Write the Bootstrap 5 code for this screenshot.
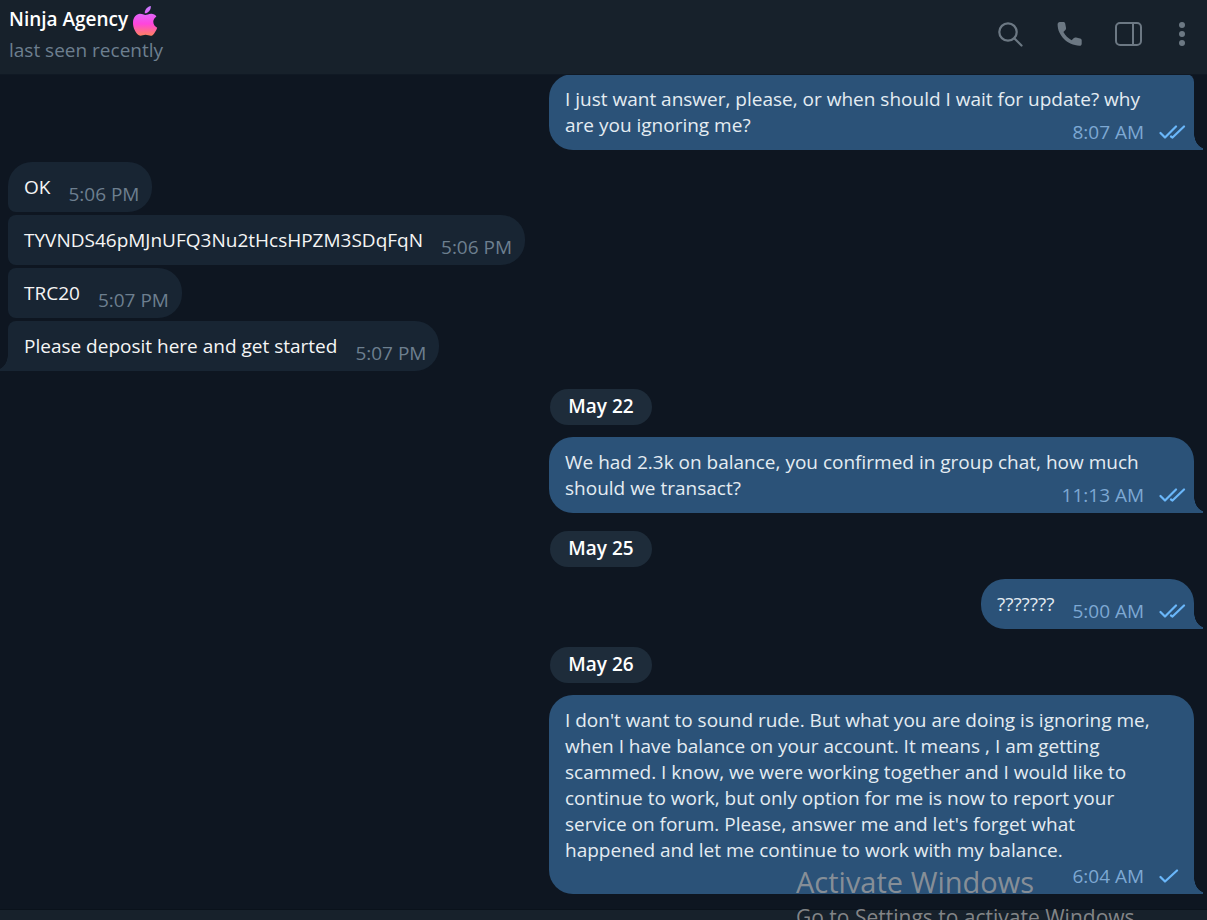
<!DOCTYPE html>
<html lang="en">
<head>
<meta charset="utf-8">
<meta name="viewport" content="width=device-width, initial-scale=1">
<title>Ninja Agency</title>
<link href="https://cdn.jsdelivr.net/npm/bootstrap@5.3.0/dist/css/bootstrap.min.css" rel="stylesheet">
<style>
  :root { --out: #2b5278; --in: #182533; --bar: #17212b; }
  body { background: #0e1621; color: #f5f5f5; font-family: "Open Sans", "Noto Sans", sans-serif; font-size: 19px; line-height: 26px; }
  .topbar { background: var(--bar); height: 75px; border-bottom: 1px solid #101924; padding: 6px 14px 0 9px; z-index: 2; }
  .peer-name { font-size: 19px; font-weight: 600; line-height: 26px; color: #fff; }
  .peer-status { color: #6d7f8f; line-height: 26px; margin-top: 5px; }
  .peer-logo { width: 26px; height: 30px; margin: 0 0 -4px 4px; }
  .tool-btn { color: #6c7883; line-height: 0; }
  .tools { gap: 29px; height: 56px; }
  .thread { padding: 0 13px 15px 8px; margin-top: -1px; }
  .bubble { position: relative; display: flow-root; max-width: 645px; padding: 12px 28px 5px 16px; border-radius: 24px; overflow-wrap: anywhere; }
  .bubble-out { align-self: flex-end; background: var(--out); color: #e4ecf2; border-bottom-right-radius: 0; }
  .bubble-in { align-self: flex-start; background: var(--in); border-bottom-left-radius: 8px; margin-bottom: 3px; }
  .joined-out { border-top-right-radius: 8px; margin-bottom: 12px; }
  .joined-in { border-top-left-radius: 8px; }
  .tail-in { border-bottom-left-radius: 0; margin-bottom: 0; }
  .bubble-out::after, .tail-in::after { content: ""; position: absolute; bottom: 0; width: 9px; height: 16px; }
  .bubble-out::after { left: 100%; background: radial-gradient(ellipse 12px 15px at 12px 0, transparent 96%, var(--out) 100%); }
  .tail-in::after { right: 100%; background: radial-gradient(ellipse 12px 15px at -3px 0, transparent 96%, var(--in) 100%); }
  .stamp { float: right; margin: 7px -15px 0 18px; color: #6d7f8f; white-space: nowrap; }
  .bubble-out .stamp { color: #7da8d3; margin-right: -20px; }
  .bubble-out .stamp-own-line { margin-top: 0; }
  .stamp svg { width: 27px; height: 16px; margin-left: 10px; vertical-align: -1px; }
  .day { align-self: center; background: #1e2c3a; color: #fff; font-weight: 600; padding: 4px 18px 6px; border-radius: 18px; margin: 18px 0 12px; }
  .composer { background: var(--bar); border-top: 1px solid #0a121b; min-height: 62px; }
  .watermark { right: 73px; bottom: -13px; color: rgba(160, 160, 160, .8); pointer-events: none; z-index: 3; width: 338px; white-space: nowrap; }
  .watermark-title { font-size: 29px; line-height: 38px; }
  .watermark-note { font-size: 21px; line-height: 32px; }
</style>
</head>
<body class="vh-100 overflow-hidden position-relative d-flex flex-column">
<header class="topbar d-flex justify-content-between flex-shrink-0 position-relative">
  <div>
    <div class="d-flex align-items-center">
      <h1 class="peer-name m-0">Ninja Agency</h1>
      <svg class="peer-logo" viewBox="0 0 26 30" aria-hidden="true">
        <defs><linearGradient id="fruit" x1="0" y1="0" x2="0" y2="1"><stop offset="0" stop-color="#c77bff"/><stop offset=".3" stop-color="#e562f5"/><stop offset=".6" stop-color="#ff45dc"/><stop offset=".85" stop-color="#ff6c8c"/><stop offset="1" stop-color="#ff8060"/></linearGradient></defs>
        <path fill="url(#fruit)" d="M18.8 0c.5 3.500-2.600 7.500-6 7.300C12.400 4 15.600.5 18.800 0ZM13.400 9c1.500 0 3.300-1.400 6-1.300 2 .1 3.900 1 5 2.700-4.600 2.900-3.900 9.300.8 11.300-.8 2.500-2.500 5.400-4.300 7.200-2.400 2-4.400-.1-7.300-.1-3 0-4.700 2-7.200.2C3.300 26.300 1 21.600 1 16.900c0-5.600 3.400-9 7-9.100 2.300 0 3.900 1.200 5.400 1.200Z"/>
      </svg>
    </div>
    <div class="peer-status">last seen recently</div>
  </div>
  <div class="tools d-flex align-items-center">
    <button type="button" class="tool-btn btn border-0 p-0" aria-label="Search"><svg width="32" height="32" viewBox="0 0 32 32" fill="none" stroke="currentColor" stroke-width="2.200" stroke-linecap="round"><circle cx="14" cy="14" r="8.700"/><path d="m20.500 20.500 7 7"/></svg></button>
    <button type="button" class="tool-btn btn border-0 p-0" aria-label="Call"><svg width="30" height="32" viewBox="0 0 30 32" fill="currentColor"><path d="M4.800 4h3.600c1 0 1.600.7 1.800 1.600l.8 4.200c.2.900 0 1.500-.6 2.100l-2 2.200c1.900 3.600 4.700 6.300 8.200 8.200l2.300-2.200c.6-.6 1.300-.8 2.100-.6l4.100.9c1 .2 1.600.9 1.600 1.800v3.500c0 1.300-.9 2.200-2.200 2.100C12.400 27.200 2.600 17.600 2.600 6.300 2.600 5 3.500 4 4.800 4Z"/></svg></button>
    <button type="button" class="tool-btn btn border-0 p-0" aria-label="Toggle side panel"><svg width="28" height="32" viewBox="0 0 28 32" fill="none" stroke="currentColor" stroke-width="2"><rect x="2" y="5" width="25" height="22" rx="4"/><path d="M19 5v22" /></svg></button>
    <button type="button" class="tool-btn btn border-0 p-0" aria-label="More options"><svg width="22" height="32" viewBox="0 0 22 32" fill="currentColor"><circle cx="11" cy="7" r="3"/><circle cx="11" cy="16" r="3"/><circle cx="11" cy="25" r="3"/></svg></button>
  </div>
</header>

<svg class="d-none" aria-hidden="true">
  <symbol id="read" viewBox="0 0 27 16"><path d="m1.500 9 4.500 4.500L17 2.500M12 12.500l1.500 1L25 2.500" fill="none" stroke="#6ab7fa" stroke-width="2.200" stroke-linecap="round" stroke-linejoin="round"/></symbol>
  <symbol id="sent" viewBox="0 0 27 16"><path d="m1.500 9 4.500 4.500L18 2.500" fill="none" stroke="#6ab7fa" stroke-width="2.200" stroke-linecap="round" stroke-linejoin="round"/></symbol>
</svg>

<main class="thread d-flex flex-column flex-shrink-0">
  <div class="bubble bubble-out joined-out">I just want answer, please, or when should I wait for update? why are you ignoring me?<span class="stamp">8:07 AM <svg role="img" aria-label="Read"><use href="#read"/></svg></span></div>
  <div class="bubble bubble-in">OK<span class="stamp">5:06 PM</span></div>
  <div class="bubble bubble-in joined-in">TYVNDS46pMJnUFQ3Nu2tHcsHPZM3SDqFqN<span class="stamp">5:06 PM</span></div>
  <div class="bubble bubble-in joined-in">TRC20<span class="stamp">5:07 PM</span></div>
  <div class="bubble bubble-in joined-in tail-in">Please deposit here and get started<span class="stamp">5:07 PM</span></div>
  <div class="day">May 22</div>
  <div class="bubble bubble-out">We had 2.3k on balance, you confirmed in group chat, how much should we transact?<span class="stamp">11:13 AM <svg role="img" aria-label="Read"><use href="#read"/></svg></span></div>
  <div class="day">May 25</div>
  <div class="bubble bubble-out">???????<span class="stamp">5:00 AM <svg role="img" aria-label="Read"><use href="#read"/></svg></span></div>
  <div class="day">May 26</div>
  <div class="bubble bubble-out">I don't want to sound rude. But what you are doing is ignoring me, when I have balance on your account. It means , I am getting scammed. I know, we were working together and I would like to continue to work, but only option for me is now to report your service on forum. Please, answer me and let's forget what happened and let me continue to work with my balance.<span class="stamp stamp-own-line">6:04 AM <svg role="img" aria-label="Sent"><use href="#sent"/></svg></span></div>
</main>
<footer class="composer flex-shrink-0"></footer>

<div class="watermark position-absolute">
  <div class="watermark-title">Activate Windows</div>
  <div class="watermark-note">Go to Settings to activate Windows</div>
</div>
</body>
</html>
